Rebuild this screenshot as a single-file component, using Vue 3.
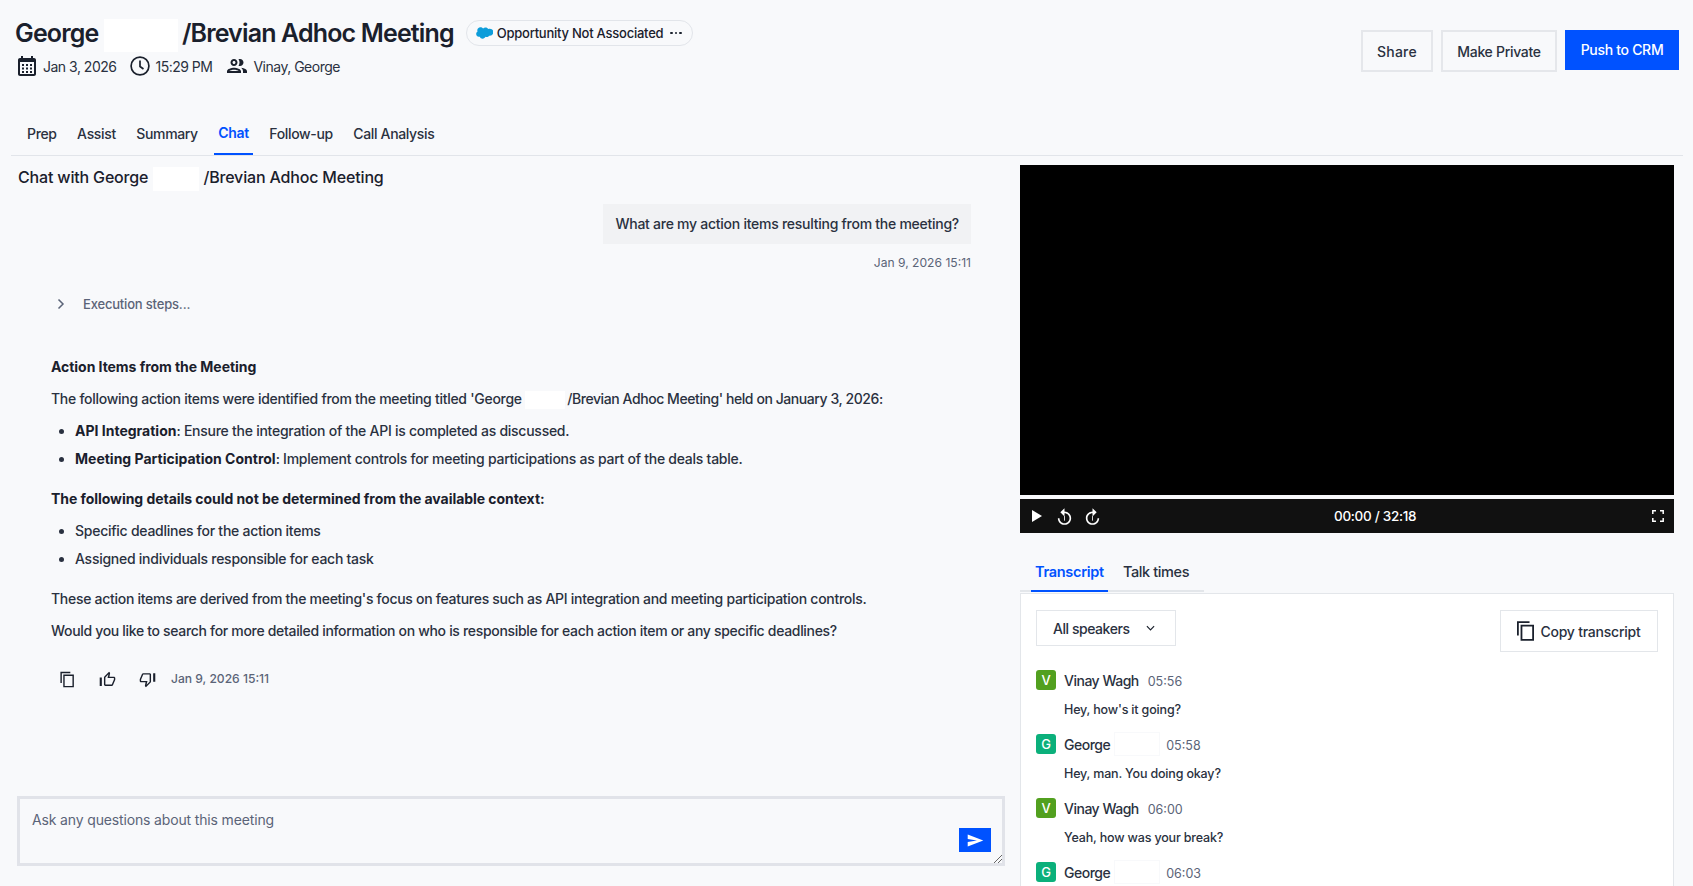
<script setup>
const tabs = ['Prep', 'Assist', 'Summary', 'Chat', 'Follow-up', 'Call Analysis']
const lines = [
  { who: 'V', name: 'Vinay Wagh', time: '05:56', text: "Hey, how's it going?" },
  { who: 'G', name: 'George', time: '05:58', text: 'Hey, man. You doing okay?' },
  { who: 'V', name: 'Vinay Wagh', time: '06:00', text: 'Yeah, how was your break?' },
  { who: 'G', name: 'George', time: '06:03', text: '' }
]
const copyPath = 'M16 1H2v16h2V3h12V1zm5 4H6v18h15V5zm-2 16H8V7h11v14z'
const thumbPath = 'M9 21h9c.83 0 1.54-.5 1.84-1.22l3.02-7.05c.09-.23.14-.47.14-.73v-2c0-1.1-.9-2-2-2h-6.31l.95-4.57.03-.32c0-.41-.17-.79-.44-1.06L14.17 1 7.58 7.59C7.22 7.95 7 8.45 7 9v10c0 1.1.9 2 2 2zM9 9l4.34-4.34L12 10h9v2l-3 7H9V9zM1 9h3v12H1z'
const replayPath = 'M12 5V1L7 6l5 5V7c3.31 0 6 2.69 6 6s-2.69 6-6 6-6-2.69-6-6H4c0 4.42 3.58 8 8 8s8-3.58 8-8-3.58-8-8-8z'
</script>

<template>
  <div class="page">
    <header class="header">
      <div class="head-left">
        <div class="title-row">
          <h1 class="title">George <span class="mask mask-title"></span>/Brevian Adhoc Meeting</h1>
          <div class="pill">
            <svg class="cloud" viewBox="0 0 24 17" width="17" height="12"><path fill="#0d9dda" d="M10 2.2C10.9 1.2 12.1.7 13.4.7c1.7 0 3.2.9 4 2.3.7-.3 1.4-.5 2.2-.5 2.9 0 5.2 2.4 5 5.2-.2 2.600-2.300 4.700-5 4.700-.3 0-.7 0-1-.1-.7 1.200-2 2-3.500 2-.6 0-1.200-.1-1.700-.4-.7 1.500-2.200 2.600-4 2.600-1.900 0-3.500-1.200-4.100-2.800-.3.1-.6.1-.9.1C2 14 .2 12.200.2 10c0-1.500.8-2.800 2-3.500C1.900 5.900 1.800 5.300 1.800 4.700 1.800 2.300 3.800.4 6.200.4 7.700.4 9.100 1.100 10 2.200z"/></svg>
            <span>Opportunity Not Associated</span>
            <span class="dots"><i></i><i></i><i></i></span>
          </div>
        </div>
        <div class="meta">
          <span class="meta-item">
            <svg class="ic-cal" viewBox="3 2 18 20" width="18" height="20"><path fill="#1a202c" d="M19 4h-1V2h-2v2H8V2H6v2H5c-1.110 0-1.990.9-1.990 2L3 20c0 1.100.89 2 2 2h14c1.100 0 2-.9 2-2V6c0-1.100-.9-2-2-2zm0 16H5V8h14v12zM9 12H7v-2h2v2zm4 0h-2v-2h2v2zm4 0h-2v-2h2v2zm-8 3.500H7v-2h2v2zm4 0h-2v-2h2v2zm4 0h-2v-2h2v2zM9 19H7v-2h2v2zm4 0h-2v-2h2v2zm4 0h-2v-2h2v2z"/></svg>
            Jan 3, 2026
          </span>
          <span class="meta-item">
            <svg viewBox="0 0 20 20" width="20" height="20" fill="none" stroke="#1a202c" stroke-width="1.700"><circle cx="10" cy="10" r="8.900"/><path d="M10 4.500V10.500l3.500 2.500"/></svg>
            15:29 PM
          </span>
          <span class="meta-item">
            <svg viewBox="1 4 22 16" width="22" height="16"><path fill="#1a202c" d="M9 13.750c-2.340 0-7 1.170-7 3.500V19h14v-1.750c0-2.330-4.660-3.500-7-3.500zM4.340 17c.84-.58 2.870-1.250 4.660-1.250s3.820.67 4.660 1.250H4.340zM9 12c1.930 0 3.500-1.570 3.500-3.500S10.930 5 9 5 5.500 6.570 5.500 8.500 7.070 12 9 12zm0-5c.83 0 1.500.67 1.500 1.500S9.830 10 9 10s-1.500-.67-1.500-1.500S8.170 7 9 7zm7.040 6.810c1.160.84 1.960 1.960 1.960 3.440V19h4v-1.750c0-2.020-3.500-3.170-5.960-3.440zM15 12c1.930 0 3.500-1.570 3.500-3.500S16.930 5 15 5c-.54 0-1.040.13-1.500.35.63.89 1 1.980 1 3.150s-.37 2.260-1 3.150c.46.22.96.35 1.500.35z"/></svg>
            Vinay, George
          </span>
        </div>
      </div>
      <div class="actions">
        <button class="btn btn-share">Share</button>
        <button class="btn btn-private">Make Private</button>
        <button class="btn btn-push">Push to CRM</button>
      </div>
    </header>

    <nav class="tabs">
      <span v-for="t in tabs" :key="t" class="tab" :class="{ active: t === 'Chat' }">{{ t }}</span>
    </nav>

    <main class="main">
      <section class="chat">
        <h2 class="chat-title">Chat with George <span class="mask mask-chat"></span>/Brevian Adhoc Meeting</h2>
        <div class="bubble">What are my action items resulting from the meeting?</div>
        <div class="stamp-right">Jan 9, 2026 15:11</div>

        <div class="answer">
          <div class="steps">
            <svg viewBox="0 0 10 12" width="10" height="12" fill="none" stroke="#5b6478" stroke-width="1.500"><path d="M2.500 1.500 7 6l-4.500 4.500"/></svg>
            <span>Execution steps...</span>
          </div>
          <p class="heading">Action Items from the Meeting</p>
          <p class="para p1 first">The following action items were identified from the meeting titled 'George <span class="mask mask-para"></span><span class="tail">/Brevian Adhoc Meeting' held on January 3, 2026:</span></p>
          <ul class="list l1">
            <li><b>API Integration</b>: Ensure the integration of the API is completed as discussed.</li>
            <li><b>Meeting Participation Control</b>: Implement controls for meeting participations as part of the deals table.</li>
          </ul>
          <p class="heading h2">The following details could not be determined from the available context:</p>
          <ul class="list l2">
            <li>Specific deadlines for the action items</li>
            <li>Assigned individuals responsible for each task</li>
          </ul>
          <p class="para p2">These action items are derived from the meeting's focus on features such as API integration and meeting participation controls.</p>
          <p class="para p1">Would you like to search for more detailed information on who is responsible for each action item or any specific deadlines?</p>
          <div class="feedback">
            <svg viewBox="0 0 24 24" width="17" height="17"><path fill="#1a202c" fill-rule="evenodd" :d="copyPath"/></svg>
            <svg viewBox="0 0 24 24" width="17" height="17"><path fill="#1a202c" :d="thumbPath"/></svg>
            <svg class="flip" viewBox="0 0 24 24" width="17" height="17"><path fill="#1a202c" :d="thumbPath"/></svg>
            <span class="stamp">Jan 9, 2026 15:11</span>
          </div>
        </div>

        <div class="composer">
          <span class="placeholder">Ask any questions about this meeting</span>
          <button class="send">
            <svg viewBox="0 0 24 24" width="17" height="17"><path fill="#fff" d="M1 3.500 23 12 1 20.500V14l13-2-13-2z"/></svg>
          </button>
          <svg class="grip" viewBox="0 0 8 8" width="8" height="8" stroke="#666" stroke-width="1"><path d="M0 8 8 0M4 8l4-4"/></svg>
        </div>
      </section>

      <aside class="side">
        <div class="video"></div>
        <div class="controls">
          <svg class="play" viewBox="0 0 10 12" width="10" height="12"><path fill="#fff" d="M0 0l10 6-10 6z"/></svg>
          <svg class="skip" viewBox="3 1 18 20" width="15" height="17"><path fill="#fff" :d="replayPath"/><path stroke="#fff" d="M12 10.500V16"/></svg>
          <svg class="skip fwd" viewBox="3 1 18 20" width="15" height="17"><path fill="#fff" :d="replayPath"/><path stroke="#fff" d="M12 10.500V16"/></svg>
          <span class="clock">00:00 / 32:18</span>
          <svg class="full" viewBox="0 0 12 12" width="12" height="12" fill="none" stroke="#fff" stroke-width="1.500"><path d="M.8 4V.8H4M8 .8h3.200V4M11.200 8v3.200H8M4 11.200H.8V8"/></svg>
        </div>

        <div class="subtabs">
          <span class="subtab active">Transcript</span>
          <span class="subtab">Talk times</span>
        </div>

        <div class="panel">
          <div class="panel-head">
            <div class="select">
              <span>All speakers</span>
              <svg viewBox="0 0 10 6" width="9" height="6" fill="none" stroke="#1a202c" stroke-width="1.300"><path d="M1 1l4 4 4-4"/></svg>
            </div>
            <button class="copy">
              <svg viewBox="2 1 19 22" width="17" height="20"><path fill="#1a202c" fill-rule="evenodd" :d="copyPath"/></svg>
              Copy transcript
            </button>
          </div>
          <div class="lines">
            <div v-for="l in lines" :key="l.time" class="line">
              <div class="line-head">
                <span class="avatar" :class="l.who === 'V' ? 'green' : 'teal'">{{ l.who }}</span>
                <span class="name">{{ l.name }}</span>
                <span v-if="l.who === 'G'" class="mask mask-name"></span>
                <span class="time">{{ l.time }}</span>
              </div>
              <div v-if="l.text" class="text">{{ l.text }}</div>
            </div>
          </div>
        </div>
      </aside>
    </main>
  </div>
</template>

<style>
html, body { margin: 0; background: #f8f9fb; }
</style>

<style scoped>
.page {
  height: 886px;
  overflow: hidden;
  display: flex;
  flex-direction: column;
  background: #f8f9fb;
  color: #1a202c;
  font-family: Inter, "Noto Sans", sans-serif;
}
.mask { display: inline-block; background: #fff; vertical-align: middle; }
.mask-title { width: 74px; height: 33px; margin-right: 4px; }
.mask-chat { width: 46px; height: 24px; margin: 0 4px 0 1px; }
.mask-para { width: 40px; height: 18px; margin-right: 2px; }
.mask-name { width: 46px; height: 24px; margin: 0 6px 0 4px; box-shadow: 0 0 0 1px #f8f9fb inset; }

.header { display: flex; justify-content: space-between; height: 123px; padding: 13px 14px 0 15px; box-sizing: border-box; flex: none; }
.title-row { display: flex; align-items: flex-start; gap: 12px; }
.title { margin: 0; height: 40px; font-size: 25px; line-height: 40px; font-weight: 600; letter-spacing: -0.85px; white-space: nowrap; }
.pill {
  display: flex; align-items: center; gap: 4px; height: 26px; margin-top: 7px; box-sizing: border-box;
  padding: 0 10px 0 9px; border: 1px solid #e2e5ea; border-radius: 13px; font-size: 13px; font-weight: 500; letter-spacing: -0.24px;
}
.dots { display: flex; gap: 2px; margin-left: 3px; }
.dots i { width: 2.500px; height: 2.500px; border-radius: 50%; background: #1a202c; }
.meta { display: flex; align-items: center; height: 22px; margin-top: 2px; font-size: 14px; letter-spacing: -0.5px; color: #2a3140; }
.meta-item { display: flex; align-items: center; gap: 5px; margin-right: 14px; }
.meta-item:first-child { gap: 6px; }
.ic-cal { margin: 0 1px 0 3px; }

.actions { display: flex; align-items: flex-start; gap: 8px; padding-top: 17px; }
.btn { font: 500 14px Inter, sans-serif; letter-spacing: -0.3px; color: #2a3140; background: transparent; border: 2px solid #e5e7eb; height: 42px; padding: 0; box-sizing: border-box; }
.btn-share { width: 72px; letter-spacing: 0.2px; }
.btn-private { width: 116px; }
.btn-push { width: 114px; height: 40px; background: #0052ff; border: 0; color: #fff; padding-bottom: 1px; }

.tabs { display: flex; gap: 12.500px; flex: none; margin: 0 10px 0 11px; padding-left: 12px; height: 33px; box-sizing: border-box; border-bottom: 1px solid #e2e5ea; }
.tab { padding: 0 4px; font-size: 14px; line-height: 22px; font-weight: 500; color: #2a3140; letter-spacing: -0.35px; }
.tab.active { color: #0052ff; font-weight: 600; line-height: 20px; height: 32px; box-sizing: border-box; border-bottom: 2px solid #0052ff; }

.main { flex: 1; display: flex; min-height: 0; }
.chat { width: 988px; margin-left: 17px; display: flex; flex-direction: column; flex: none; }
.chat-title { margin: 9px 0 0 1px; height: 24px; font-size: 16px; line-height: 24px; font-weight: 500; letter-spacing: -0.17px; white-space: nowrap; }
.bubble { align-self: flex-end; margin: 15px 34px 0 0; height: 40px; line-height: 40px; padding: 0 12px; background: #f1f2f4; font-size: 14px; font-weight: 500; letter-spacing: -0.26px; color: #2a3140; }
.stamp-right { align-self: flex-end; margin: 10px 34px 0 0; font-size: 12.100px; line-height: 18px; color: #5b6478; }
.answer { padding-left: 34px; font-size: 14px; line-height: 20px; letter-spacing: -0.26px; color: #2a3140; font-weight: 450; }
.steps { display: flex; align-items: center; gap: 17px; height: 20px; margin: 22px 0 0 5px; font-size: 13px; letter-spacing: -0.18px; color: #5b6478; }
.heading { margin: 43px 0 0; font-weight: 700; color: #1a202c; letter-spacing: -0.05px; }
.h2 { margin-top: 20px; }
.para { margin: 0; height: 20px; white-space: nowrap; letter-spacing: -0.32px; }
.p1 { margin-top: 12px; }
.p2 { margin-top: 20px; letter-spacing: -0.285px; }
.first { letter-spacing: -0.28px; }
.tail { letter-spacing: -0.43px; }
.list { margin: 0; padding-left: 24px; }
.list b { font-weight: 700; color: #1a202c; letter-spacing: 0; }
.l1 { margin-top: 12px; }
.l1 li + li { margin-top: 8px; }
.l2 { margin-top: 12px; }
.l2 li + li { margin-top: 8px; }
.feedback { display: flex; align-items: center; gap: 23px; height: 20px; margin: 28px 0 0 8px; }
.flip { transform: rotate(180deg); }
.stamp { margin-left: -8px; font-size: 12.100px; letter-spacing: 0; color: #5b6478; }
.composer { position: relative; margin-top: auto; margin-bottom: 20px; height: 70px; box-sizing: border-box; border: 3px solid #e1e3e9; }
.placeholder { display: block; margin: 11px 0 0 12px; font-size: 14px; line-height: 20px; letter-spacing: -0.15px; color: #5b6478; }
.send { position: absolute; right: 11px; bottom: 11px; width: 32px; height: 24px; padding: 0; border: 0; background: #0052ff; display: flex; align-items: center; justify-content: center; }
.grip { position: absolute; right: 0; bottom: 0; }

.side { width: 654px; margin-left: 15px; padding-top: 9px; flex: none; display: flex; flex-direction: column; min-height: 0; }
.video { height: 330px; background: #000; flex: none; }
.controls { display: flex; align-items: center; height: 34px; margin-top: 4px; padding: 0 10px 0 12px; background: #111; color: #fff; flex: none; }
.skip { margin-left: 15px; }
.fwd { margin-left: 13px; transform: scaleX(-1); }
.clock { margin-left: 234px; font-size: 13.500px; font-weight: 500; letter-spacing: -0.3px; }
.full { margin-left: auto; }
.subtabs { display: flex; gap: 11px; height: 35px; width: 173px; margin-top: 22px; padding-left: 11px; border-bottom: 2px solid #e3e6ea; flex: none; }
.subtab { height: 35px; padding: 0 4px; font-size: 14.500px; line-height: 34px; letter-spacing: -0.4px; font-weight: 500; color: #2a3140; }
.subtab.active { width: 69px; color: #0052ff; font-weight: 600; letter-spacing: -0.3px; border-bottom: 2px solid #0052ff; }
.panel { flex: 1; min-height: 0; overflow: hidden; margin-top: 1px; background: #fff; border: 1px solid #e3e6ea; border-bottom: 0; padding: 16px 15px 0; }
.panel-head { display: flex; justify-content: space-between; align-items: flex-start; }
.select { display: flex; align-items: center; justify-content: space-between; width: 140px; height: 36px; box-sizing: border-box; padding: 0 20px 0 16px; border: 1px solid #e3e6ea; font-size: 14px; letter-spacing: -0.45px; font-weight: 500; color: #2a3140; }
.copy { display: flex; align-items: center; justify-content: center; gap: 6px; width: 158px; height: 42px; padding: 0; background: #fff; border: 1px solid #e3e6ea; font: 500 14px Inter, sans-serif; letter-spacing: -0.23px; color: #2a3140; }
.lines { margin-top: 18px; }
.line { height: 64px; }
.line-head { display: flex; align-items: center; height: 20px; }
.avatar { width: 20px; height: 20px; border-radius: 3px; color: #fff; font-size: 13px; font-weight: 500; line-height: 20px; text-align: center; margin-right: 8px; }
.green { background: #52a01f; }
.teal { background: #0bb07b; }
.name { font-size: 14px; font-weight: 500; letter-spacing: -0.5px; color: #2a3140; }
.time { margin: 2px 0 0 9px; font-size: 12.500px; color: #5b6478; }
.mask-name + .time { margin-left: 0; }
.text { margin: 10px 0 0 28px; font-size: 12.500px; line-height: 20px; font-weight: 500; color: #2a3140; letter-spacing: -0.17px; }
</style>
